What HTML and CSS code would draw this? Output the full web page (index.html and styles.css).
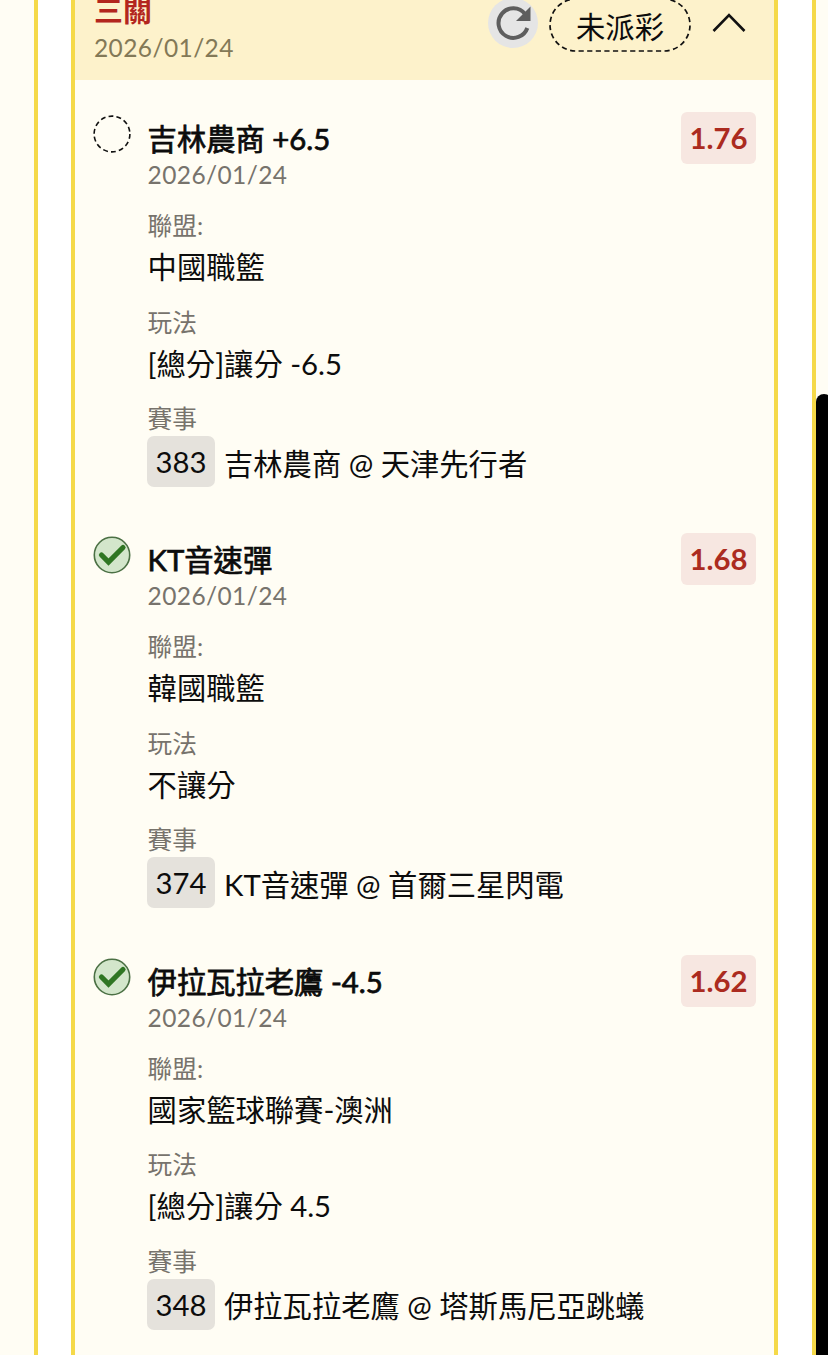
FILE: index.html
```html
<!DOCTYPE html>
<html lang="zh-Hant">
<head>
  <meta charset="UTF-8">
  <meta name="viewport" content="width=device-width, initial-scale=1">
  <title>三關</title>
  <link rel="stylesheet" href="styles.css">
</head>
<body>

<div class="panel">
  <div class="ticket">
    <div class="ticket-header">
      <div class="ticket-info">
        <h2>三關</h2>
        <div class="date">2026/01/24</div>
      </div>
      <button class="refresh" type="button" aria-label="refresh">
        <svg width="50" height="50" viewBox="0 0 50 50">
          <path d="M37 16 A14.8 14.8 0 1 0 39.3 30" fill="none" stroke="#5e5e5e" stroke-width="4"/>
          <path d="M42.5 8.5V23H28Z" fill="#5e5e5e"/>
        </svg>
      </button>
      <div class="status">
        <svg class="status-border" width="144" height="56" viewBox="0 0 144 56">
          <rect x="2" y="2" width="140" height="52" rx="26" fill="none" stroke="#111" stroke-width="1.7" stroke-dasharray="5.2 3.4"/>
        </svg>
        <span>未派彩</span>
      </div>
      <svg class="arrow" width="34" height="20" viewBox="0 0 34 20">
        <path d="M1.5 18L17 2L32.5 18" fill="none" stroke="#111" stroke-width="2.6"/>
      </svg>
    </div>

    <div class="bet-list">
      <div class="bet">
        <svg class="bet-icon" width="38" height="38" viewBox="0 0 38 38">
          <circle cx="19" cy="19" r="17.9" fill="none" stroke="#111" stroke-width="1.6" stroke-dasharray="4.9 3.13"/>
        </svg>
        <div class="bet-content">
          <h3>吉林農商 +6.5</h3>
          <div class="date">2026/01/24</div>
          <div class="label">聯盟:</div>
          <div class="value">中國職籃</div>
          <div class="label">玩法</div>
          <div class="value">[總分]讓分 -6.5</div>
          <div class="label">賽事</div>
          <div class="match"><span class="code">383</span><span>吉林農商 @ 天津先行者</span></div>
        </div>
        <div class="odds">1.76</div>
      </div>

      <div class="bet">
        <svg class="bet-icon" width="38" height="38" viewBox="0 0 38 38">
          <circle cx="19" cy="19" r="17.7" fill="#d3e6cb" stroke="#4b7044" stroke-width="1.6"/>
          <path d="M8.5 19L15.5 26L30 11.5" fill="none" stroke="#2f7623" stroke-width="5.2" stroke-linecap="round"/>
        </svg>
        <div class="bet-content">
          <h3>KT音速彈</h3>
          <div class="date">2026/01/24</div>
          <div class="label">聯盟:</div>
          <div class="value">韓國職籃</div>
          <div class="label">玩法</div>
          <div class="value">不讓分</div>
          <div class="label">賽事</div>
          <div class="match"><span class="code">374</span><span>KT音速彈 @ 首爾三星閃電</span></div>
        </div>
        <div class="odds">1.68</div>
      </div>

      <div class="bet">
        <svg class="bet-icon" width="38" height="38" viewBox="0 0 38 38">
          <circle cx="19" cy="19" r="17.7" fill="#d3e6cb" stroke="#4b7044" stroke-width="1.6"/>
          <path d="M8.5 19L15.5 26L30 11.5" fill="none" stroke="#2f7623" stroke-width="5.2" stroke-linecap="round"/>
        </svg>
        <div class="bet-content">
          <h3>伊拉瓦拉老鷹 -4.5</h3>
          <div class="date">2026/01/24</div>
          <div class="label">聯盟:</div>
          <div class="value">國家籃球聯賽-澳洲</div>
          <div class="label">玩法</div>
          <div class="value">[總分]讓分 4.5</div>
          <div class="label">賽事</div>
          <div class="match"><span class="code">348</span><span>伊拉瓦拉老鷹 @ 塔斯馬尼亞跳蟻</span></div>
        </div>
        <div class="odds">1.62</div>
      </div>
    </div>
  </div>
</div>

<div class="scrollbar"></div>

</body>
</html>
```

FILE: styles.css
```css
* {
  box-sizing: border-box;
}

body {
  font-family: Lato, 'Noto Sans CJK TC', sans-serif;
  font-size: 29.3px;
  color: #0c0c0c;
  background: #fffdf4;
  height: 1355px;
  margin: 0;
  padding: 0 12px 0 34px;
  overflow: hidden;
}

h2,
h3 {
  margin: 0;
}

.panel {
  height: 1355px;
  padding: 0 34px;
  background: #fff;
  border: solid #f5d949;
  border-width: 0 4px;
}

.ticket {
  height: 1355px;
  background: #fffdf4;
  border: solid #f5d949;
  border-width: 0 4px;
  margin-left: -1px;
}

.ticket-header {
  display: flex;
  align-items: flex-start;
  height: 80px;
  padding: 0 28px 0 19px;
  background: #fdf2cb;
}

.ticket-info {
  flex: 1;
}

.ticket-info h2 {
  height: 32px;
  line-height: 22px;
  font-size: 29px;
  color: #b3261e;
}

.date {
  font-size: 24.5px;
  line-height: 32px;
  letter-spacing: 0.4px;
  color: #77736c;
}

.ticket-info .date {
  color: #837957;
}

.refresh {
  width: 50px;
  height: 50px;
  margin: -2px 10px 0 0;
  padding: 0;
  border: none;
  border-radius: 50%;
  background: #e5e5e5;
}

.refresh svg {
  display: block;
}

.status {
  position: relative;
  width: 144px;
  height: 56px;
  margin-top: -3px;
  line-height: 60px;
  text-align: center;
}

.status-border {
  position: absolute;
  left: 0;
  top: 0;
}

.arrow {
  margin: 13px 0 0 20px;
}

.bet-list {
  padding: 32px 18px 0;
}

.bet {
  display: flex;
  align-items: flex-start;
  height: 421.4px;
}

.bet-icon {
  flex: none;
  margin: 3px 16px 0 0;
}

.bet-content {
  flex: 1;
  padding-top: 7px;
}

.bet-content h3 {
  font-size: 29.3px;
  font-weight: normal;
  line-height: 40px;
  padding-left: 0.6px;
  -webkit-text-stroke: 0.75px #0c0c0c;
}

.bet-content .date,
.label,
.value {
  padding-left: 0.6px;
}

.label {
  margin-top: 15.5px;
  font-size: 24.7px;
  line-height: 32px;
  color: #77736c;
}

.date + .label {
  margin-top: 19px;
}

.value {
  line-height: 49px;
}

.match {
  display: flex;
  align-items: center;
  margin-top: 1px;
  white-space: nowrap;
}

.code {
  width: 68px;
  height: 51px;
  margin-right: 9px;
  line-height: 52px;
  text-align: center;
  border-radius: 7px;
  background: #e5e2dc;
}

.odds {
  width: 75px;
  height: 52px;
  line-height: 52px;
  font-weight: bold;
  text-align: center;
  color: #ab2b20;
  border-radius: 6px;
  background: #f7e7e1;
}

.scrollbar {
  position: absolute;
  left: 816px;
  top: 394px;
  width: 16px;
  height: 980px;
  border-radius: 8px;
  background: #000;
}
```
